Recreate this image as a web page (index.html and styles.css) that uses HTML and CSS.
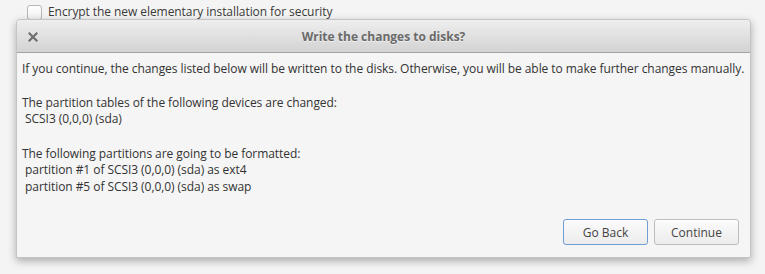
FILE: index.html
```html
<!DOCTYPE html>
<html lang="en">
<head>
  <meta charset="UTF-8">
  <meta name="viewport" content="width=device-width, initial-scale=1.0">
  <title>Write the changes to disks?</title>
  <link rel="stylesheet" href="styles.css">
</head>
<body>
  <div class="installer">
    <label class="encrypt-option">
      <span class="checkbox"></span>
      <span>Encrypt the new elementary installation for security</span>
    </label>
  </div>

  <div class="dialog">
    <div class="dialog-titlebar">
      <span class="close-button">
        <svg width="10" height="10" viewBox="0 0 10 10">
          <path d="M1.5 1.5 L8.5 8.5 M8.5 1.5 L1.5 8.5" stroke="#6f6f6f" stroke-width="2.2" stroke-linecap="square"/>
        </svg>
      </span>
      <h1>Write the changes to disks?</h1>
    </div>

    <div class="dialog-body">
      <p>If you continue, the changes listed below will be written to the disks. Otherwise, you will be able to make further changes manually.</p>
      <p class="section">The partition tables of the following devices are changed:<br>&nbsp;SCSI3 (0,0,0) (sda)</p>
      <p class="section last">The following partitions are going to be formatted:<br>&nbsp;partition #1 of SCSI3 (0,0,0) (sda) as ext4<br>&nbsp;partition #5 of SCSI3 (0,0,0) (sda) as swap</p>
    </div>

    <div class="dialog-actions">
      <button class="dialog-button focused">Go Back</button>
      <button class="dialog-button">Continue</button>
    </div>
  </div>
</body>
</html>
```

FILE: styles.css
```css
body {
  margin: 0;
  width: 765px;
  height: 274px;
  overflow: hidden;
  background-color: #f4f4f4;
  font-family: "Open Sans", sans-serif;
  font-size: 12px;
  color: #333;
}

.installer {
  height: 19px;
  padding-left: 27px;
}

.encrypt-option {
  display: flex;
  align-items: flex-start;
  gap: 6px;
  padding-top: 4px;
  line-height: 16px;
  letter-spacing: -0.07px;
  color: #3a3a3a;
}

.checkbox {
  width: 13px;
  height: 13px;
  margin-top: 1px;
  border: 1px solid #b8b8b8;
  border-radius: 3px;
  background: linear-gradient(#ffffff, #f0f0f0);
  flex-shrink: 0;
}

.dialog {
  position: relative;
  margin-left: 16px;
  width: 733px;
  height: 237px;
  border: 1px solid #c4c4c4;
  border-radius: 4px 4px 0 0;
  background-color: #f5f5f5;
  box-shadow: 0 3px 8px rgba(0, 0, 0, 0.3);
  display: flex;
  flex-direction: column;
}

.dialog-titlebar {
  height: 32px;
  display: flex;
  align-items: center;
  justify-content: center;
  border-bottom: 1px solid #a3a3a3;
  border-radius: 4px 4px 0 0;
  background: linear-gradient(#eeeeee, #d3d3d3);
}

.dialog-titlebar h1 {
  margin: 0;
  font-size: 12px;
  font-weight: bold;
  color: #6a6a6a;
  text-shadow: 0 1px 0 rgba(255, 255, 255, 0.5);
}

.close-button {
  position: absolute;
  left: 11px;
  top: 12px;
  display: flex;
}

.dialog-body {
  padding: 8px 5px 0 5px;
  flex: 1;
}

.dialog-body p {
  margin: 0;
  line-height: 16.5px;
  letter-spacing: -0.06px;
  white-space: nowrap;
}

.dialog-body .section {
  margin-top: 17px;
}

.dialog-body .section.last {
  margin-top: 18px;
}

.dialog-actions {
  display: flex;
  justify-content: flex-end;
  gap: 6px;
  padding: 0 11px 12px 0;
}

.dialog-button {
  width: 85px;
  height: 26px;
  font-family: "Open Sans", sans-serif;
  font-size: 12px;
  color: #444;
  border: 1px solid #bdbdbd;
  border-radius: 3px;
  background: linear-gradient(#fbfbfb, #ececec);
  box-shadow: inset 0 1px 0 #ffffff;
}

.dialog-button.focused {
  border-color: #6d9fd3;
}
```
